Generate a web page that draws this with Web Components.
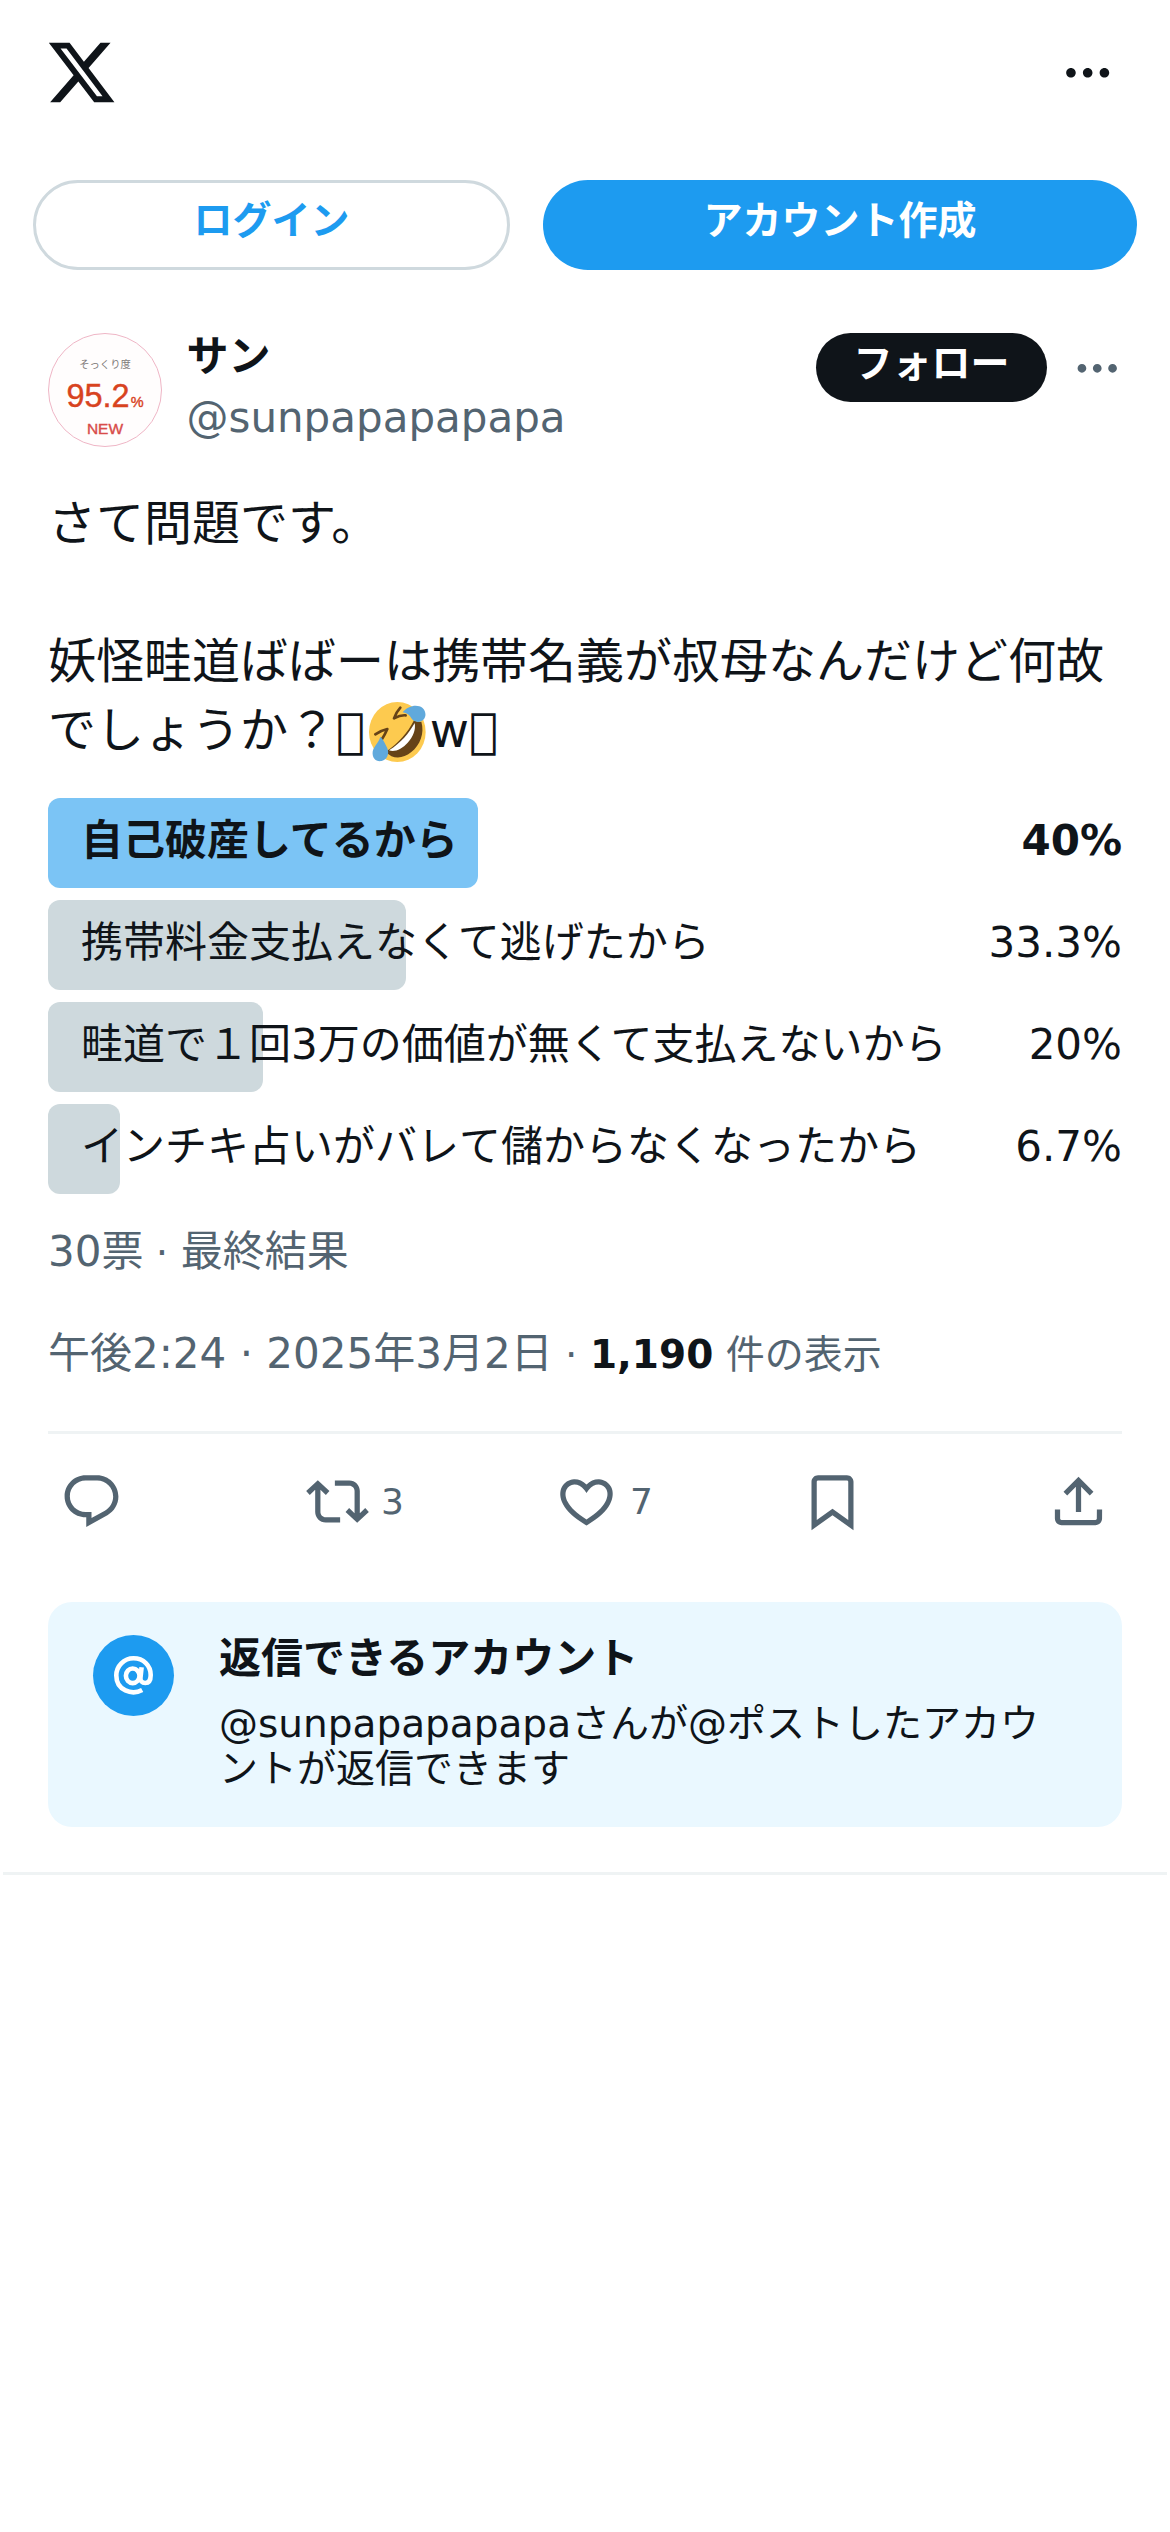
<!DOCTYPE html>
<html lang="ja">
<head>
<meta charset="utf-8">
<title>X</title>
<style>
html,body{margin:0;background:#fff}
body{font-family:"DejaVu Sans","Noto Sans CJK JP",sans-serif;color:#0f1419}
</style>
</head>
<body>
<x-post-page></x-post-page>
<script>
const define = (name, html) => {
  const template = document.createElement('template');
  template.innerHTML = html;
  customElements.define(name, class extends HTMLElement {
    constructor() {
      super();
      this.attachShadow({ mode: 'open' }).append(template.content.cloneNode(true));
    }
  });
};

const ICONS = {
  logo: 'M18.244 2.25h3.308l-7.227 8.26 8.502 11.24H16.17l-5.214-6.817L4.99 21.75H1.68l7.73-8.835L1.254 2.25H8.08l4.713 6.231zm-1.161 17.52h1.833L7.084 4.126H5.117z',
  more: 'M3 12c0-1.1.9-2 2-2s2 .9 2 2-.9 2-2 2-2-.9-2-2zm9 2c1.1 0 2-.9 2-2s-.9-2-2-2-2 .9-2 2 .9 2 2 2zm7 0c1.1 0 2-.9 2-2s-.9-2-2-2-2 .9-2 2 .9 2 2 2z',
  reply: 'M1.751 10c0-4.42 3.584-8 8.005-8h4.366c4.49 0 8.129 3.64 8.129 8.13 0 2.96-1.607 5.68-4.196 7.11l-8.054 4.46v-3.69h-.067c-4.49.1-8.183-3.51-8.183-8.01zm8.005-6c-3.317 0-6.005 2.69-6.005 6 0 3.37 2.77 6.08 6.138 6.01l.351-.01h1.761v2.3l5.087-2.81c1.951-1.08 3.163-3.13 3.163-5.36 0-3.39-2.744-6.13-6.129-6.13H9.756z',
  repost: 'M4.5 3.88l4.432 4.14-1.364 1.46L5.5 7.55V16c0 1.1.896 2 2 2H13v2H7.5c-2.209 0-4-1.79-4-4V7.55L1.432 9.48.068 8.02 4.5 3.88zM16.5 6H11V4h5.5c2.209 0 4 1.79 4 4v8.45l2.068-1.93 1.364 1.46-4.432 4.14-4.432-4.14 1.364-1.46 2.068 1.93V8c0-1.1-.896-2-2-2z',
  like: 'M16.697 5.5c-1.222-.06-2.679.51-3.89 2.16l-.805 1.09-.806-1.09C9.984 6.01 8.526 5.44 7.304 5.5c-1.243.07-2.349.78-2.91 1.91-.552 1.12-.633 2.78.479 4.82 1.074 1.97 3.257 4.27 7.129 6.61 3.87-2.34 6.052-4.64 7.126-6.61 1.111-2.04 1.03-3.7.477-4.82-.561-1.13-1.666-1.84-2.908-1.91zm4.187 7.69c-1.351 2.48-4.001 5.12-8.379 7.67l-.503.3-.504-.3c-4.379-2.55-7.029-5.19-8.382-7.67-1.36-2.5-1.41-4.86-.514-6.67.887-1.79 2.647-2.91 4.601-3.01 1.651-.09 3.368.56 4.798 2.01 1.429-1.45 3.146-2.1 4.796-2.01 1.954.1 3.714 1.22 4.601 3.01.896 1.81.846 4.17-.514 6.67z',
  bookmark: 'M4 4.5C4 3.12 5.119 2 6.5 2h11C18.881 2 20 3.12 20 4.5v18.44l-8-5.71-8 5.71V4.5zM6.5 4c-.276 0-.5.22-.5.5v14.56l6-4.29 6 4.29V4.5c0-.28-.224-.5-.5-.5h-11z',
  share: 'M12 2.59l5.7 5.7-1.41 1.42L13 6.41V16h-2V6.41l-3.3 3.3-1.41-1.42L12 2.59zM21 15l-.02 3.51c0 1.38-1.12 2.49-2.5 2.49H5.5C4.11 21 3 19.88 3 18.5V15h2v3.5c0 .28.22.5.5.5h12.98c.28 0 .5-.22.5-.5L19 15h2z'
};

customElements.define('x-icon', class extends HTMLElement {
  connectedCallback() {
    if (this.shadowRoot) return;
    this.attachShadow({ mode: 'open' }).innerHTML = `
      <style>:host{display:block;flex:none;width:var(--size,63px);height:var(--size,63px)}svg{display:block;width:100%;height:100%;fill:currentColor}</style>
      <svg viewBox="0 0 24 24" aria-hidden="true"><path d="${ICONS[this.getAttribute('name')]}"/></svg>`;
  }
});

define('x-button', `
<style>
:host{display:flex;justify-content:center;box-sizing:border-box;height:90px;border-radius:45px;font-size:39px;font-weight:700;line-height:82px;color:#fff;background:#1d9bf0;border:0 solid #cfd9de}
:host([kind=outline]){background:#fff;color:#1d9bf0;border-width:3px;line-height:76px}
:host([kind=dark]){background:#0f1419;height:69px;line-height:62px;width:231px}
</style><slot></slot>`);

define('x-topbar', `
<style>
:host{display:flex;align-items:center;justify-content:space-between;padding:36px 53.5px 0 44.7px}
.logo{--size:73px}.more{--size:57.4px}
</style>
<x-icon class="logo" name="logo"></x-icon><x-icon class="more" name="more"></x-icon>`);

define('x-auth-bar', `
<style>:host{display:grid;grid-template-columns:477px 1fr;gap:33px;padding:0 33px;margin-top:71px}</style>
<x-button kind="outline">ログイン</x-button><x-button>アカウント作成</x-button>`);

define('x-avatar', `
<style>
:host{box-sizing:border-box;width:114px;height:114px;flex:none;border-radius:50%;border:1px solid #efb6c6;background:#fffdfd;display:flex;flex-direction:column;align-items:center;font-family:"Liberation Sans","Noto Sans CJK JP",sans-serif;color:#d8462c}
.l{font-size:10.3px;line-height:14px;color:#7d7978;margin-top:24px}
.n{display:flex;align-items:baseline;font-size:32.5px;line-height:34px;margin-top:7px;gap:1px;color:#d8431f;-webkit-text-stroke:.4px #d8431f}
.n small{font-size:14.5px}
.w{font-size:15.5px;line-height:18px;margin-top:1px;color:#d84c4a;-webkit-text-stroke:.4px #d84c4a}
</style>
<div class="l">そっくり度</div><div class="n"><span>95.2</span><small>%</small></div><div class="w">NEW</div>`);

define('x-author', `
<style>
:host{display:flex;margin-top:63px;height:114px}
.who{display:flex;flex-direction:column;gap:13px;margin-left:24.5px;flex:1;font-size:42px;line-height:48px}
.who b{font-weight:700}.who span{color:#536471}
.more{--size:52.5px;color:#536471;margin:9px -1.5px 0 24px}
</style>
<x-avatar></x-avatar>
<div class="who"><b>サン</b><span>@sunpapapapapa</span></div>
<x-button kind="dark">フォロー</x-button>
<x-icon class="more" name="more"></x-icon>`);

define('x-rofl', `
<style>:host{display:inline-block;width:57px;height:60px;margin:0 4px 0 4px;vertical-align:-15px;line-height:0}svg{display:block;width:100%;height:100%}</style>
<svg viewBox="0 0 171 180" role="img">
<ellipse cx="85" cy="90" rx="85" ry="90" fill="#fdca4f"/>
<path d="M135 55C116 92 90 123 51 149C70 173 102 171 126 151C154 128 167 94 157 59C150 61 142 59 135 55Z" fill="#664318"/>
<path d="M137 63C120 94 96 122 60 145C78 151 99 141 116 122C132 105 141 84 137 63Z" fill="#fff"/>
<path d="M94 17C85 27 79 38 75 49C88 42 98 39 110 40" fill="none" stroke="#664318" stroke-width="8" stroke-linecap="round" stroke-linejoin="round"/>
<path d="M19 97C30 89 42 84 55 81C51 91 45 102 36 116" fill="none" stroke="#664318" stroke-width="8" stroke-linecap="round" stroke-linejoin="round"/>
<path d="M101 31C114 15 135 8 151 13C169 19 174 39 165 51C155 64 135 62 127 49C122 39 114 33 101 31Z" fill="#60a9dc"/>
<path d="M34 104C44 113 49 127 55 139C62 155 54 174 38 177C20 180 9 167 11 149C14 133 29 122 34 104Z" fill="#60a9dc"/>
</svg>`);

define('x-post-text', `
<style>:host{display:block;font-size:48px;line-height:69px;height:276px;margin-top:42px}</style><slot></slot>`);

customElements.define('x-poll-row', class extends HTMLElement {
  connectedCallback() {
    if (this.shadowRoot) return;
    const value = this.getAttribute('value');
    this.attachShadow({ mode: 'open' }).innerHTML = `
<style>
:host{display:grid;height:90px;font-size:42px;line-height:85px;white-space:nowrap}
:host([winner]){font-weight:700}
.bar,.txt{grid-area:1/1}
.bar{width:${value}%;border-radius:12px;background:#ced9dd}
:host([winner]) .bar{background:#7bc4f5}
.txt{display:flex;justify-content:space-between;padding-left:33px}
</style>
<div class="bar"></div><div class="txt"><span><slot></slot></span><span>${value}%</span></div>`;
  }
});

define('x-poll', `<style>:host{display:flex;flex-direction:column;gap:12px;margin-top:33px}</style><slot></slot>`);

define('x-meta', `
<style>
:host{display:flex;flex-direction:column;gap:42px;margin-top:28px;padding-bottom:47px;border-bottom:3px solid #eff3f4;font-size:42px;line-height:60px;color:#536471}
.small{font-size:39px;line-height:1}
b{color:#0f1419}
</style>
<div>30票<span class="small"> · </span>最終結果</div>
<div>午後2:24 · 2025年3月2日<span class="small"> · <b>1,190</b> 件の表示</span></div>`);

define('x-actions', `
<style>
:host{display:grid;grid-template-columns:246px 249px 246px 246px 63px;padding:0 12px;margin-top:36px;color:#536471;font-size:36px;line-height:64px}
div{display:flex;gap:12px;height:63px}
</style>
<div><x-icon name="reply"></x-icon></div>
<div><x-icon name="repost"></x-icon><span>3</span></div>
<div><x-icon name="like"></x-icon><span>7</span></div>
<div><x-icon name="bookmark"></x-icon></div>
<div><x-icon name="share"></x-icon></div>`);

define('x-reply-notice', `
<style>
:host{display:flex;box-sizing:border-box;gap:45px;height:225px;margin-top:69px;padding:33px 48px 0 45px;border-radius:24px;background:#eaf8ff}
.badge{flex:none;width:81px;height:81px;border-radius:50%;background:#1d9bf0;display:flex;align-items:center;justify-content:center}
svg{width:39px;height:39px;display:block}
.body{width:850px}
h2{margin:0;font-size:42px;line-height:48px;font-weight:700}
p{margin:18px 0 0;font-size:39px;line-height:45px}
</style>
<div class="badge"><svg viewBox="0 0 39 39" fill="none" stroke="#fff" stroke-width="4.6"><path d="M28.2 34C18 39.500 2.300 34.500 2.300 19.500C2.300 10 10 2.300 19.500 2.300C29.500 2.300 36.700 9.500 36.700 19C36.700 24.500 34.500 27 31.300 27C28 27 26.100 25 26.500 21.500L27.600 11.200"/><ellipse cx="18.700" cy="19.800" rx="6.800" ry="7.300"/></svg></div>
<div class="body"><h2>返信できるアカウント</h2><p>@sunpapapapapaさんが@ポストしたアカウントが返信できます</p></div>`);

define('x-post-page', `
<style>
:host{display:block;height:2532px;overflow:hidden;background:#fff}
article{padding:0 48px}
footer{height:3px;background:#eff3f4;margin:45px 3px 0}
</style>
<x-topbar></x-topbar>
<x-auth-bar></x-auth-bar>
<article>
<x-author></x-author>
<x-post-text>さて問題です。<br><br>妖怪畦道ばばーは携帯名義が叔母なんだけど何故でしょうか？&#xE756;<x-rofl></x-rofl>w&#xE756;</x-post-text>
<x-poll>
<x-poll-row winner value="40">自己破産してるから</x-poll-row>
<x-poll-row value="33.3">携帯料金支払えなくて逃げたから</x-poll-row>
<x-poll-row value="20">畦道で１回3万の価値が無くて支払えないから</x-poll-row>
<x-poll-row value="6.7">インチキ占いがバレて儲からなくなったから</x-poll-row>
</x-poll>
<x-meta></x-meta>
<x-actions></x-actions>
<x-reply-notice></x-reply-notice>
</article>
<footer></footer>`);
</script>
</body>
</html>
